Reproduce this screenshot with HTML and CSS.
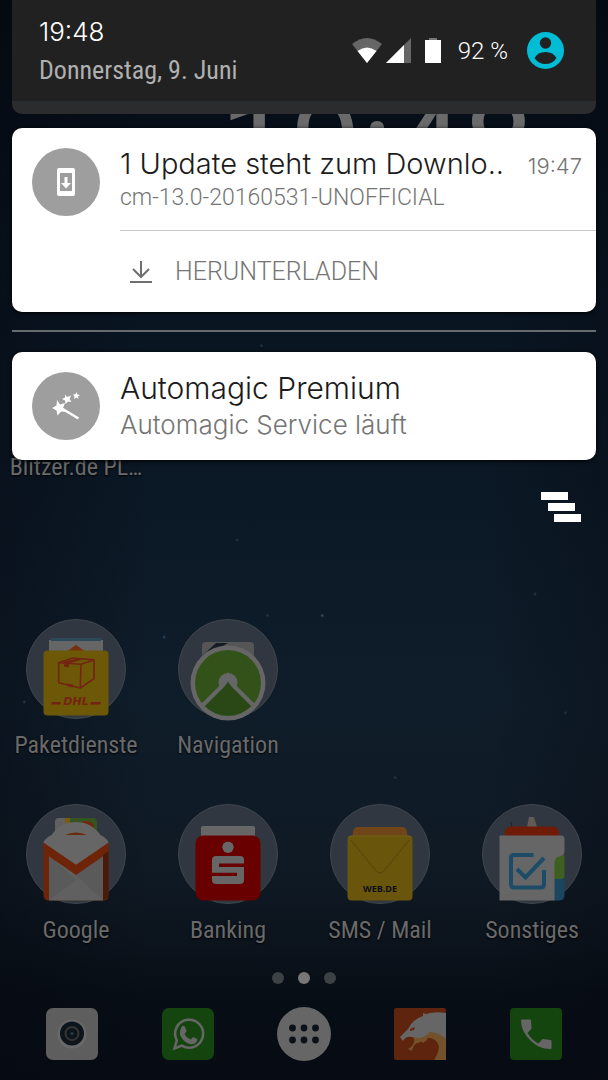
FILE: index.html
```html
<!DOCTYPE html>
<html lang="de">
<head>
  <meta charset="UTF-8">
  <meta name="viewport" content="width=device-width, initial-scale=1.0">
  <title>Benachrichtigungen</title>
  <link rel="stylesheet" href="styles.css">
</head>
<body>
  <div class="screen">
    <!-- home screen -->
    <main class="home">
      <div class="clock">19:48</div>
      <div class="apps top">
        <button class="app">Blitzer.de PL…</button>
      </div>
      <div class="apps">
        <button class="app">
          <svg viewBox="0 0 100 104">
            <circle class="folder" cx="50" cy="50" r="49.5"/>
            <path fill="#666" d="M23 21h54v14H23z"/>
            <path fill="#2c4a58" d="M25 19h50v3H25z"/>
            <path fill="#74300f" d="M50 26l10 7H40z"/>
            <rect x="17.5" y="31.5" width="65" height="65" rx="4" fill="#6c5806"/>
            <path fill="none" stroke="#732412" stroke-width="1.6" stroke-linejoin="round" d="M32.700 43.700L46.700 39 68 40.700 55 45.300zM32.700 43.700v20L54.300 69 55 45.300M54.300 69L68 59.700v-19"/>
            <path fill="#732412" d="M38 42.500l14-3 6 .5-15 4.500v4l-5-1zM41 64.500l6 1v3l-6-1.500z"/>
            <text x="50" y="86" class="dhl">DHL</text>
            <path fill="#732412" d="M26 83h9l-1 2.500h-9zM65 83h10l-1 2.500h-10z"/>
          </svg>
          <span>Paketdienste</span>
        </button>
        <button class="app">
          <svg viewBox="0 0 100 104">
            <circle class="folder" cx="50" cy="50" r="49.500"/>
            <rect x="24" y="23" width="52" height="40" rx="4" fill="#555"/>
            <path fill="#161c22" d="M24 37l14-13h12l-7 4-4 1-12 10z"/>
            <circle cx="50" cy="64" r="37.500" fill="#666"/>
            <circle cx="50" cy="64" r="33" fill="#335219"/>
            <circle cx="50" cy="63.500" r="9.500" fill="#666"/>
            <path fill="#294816" d="M50 61q2 5 7 10l16 16a33 33 0 0 1-46 0l16-16q5-5 7-10z"/>
            <path fill="none" stroke="#666" stroke-width="4" d="M25 86l19-19q4-4 6-9 2 5 6 9l19 19"/>
          </svg>
          <span>Navigation</span>
        </button>
      </div>
      <div class="apps bottom">
        <button class="app">
          <svg viewBox="0 0 100 104">
            <circle class="folder" cx="50" cy="50" r="49.500"/>
            <rect x="29" y="14" width="42" height="24" rx="4" fill="#345522"/>
            <path fill="#606060" d="M33 14h7l4 18H29V18q0-4 4-4z"/>
            <path fill="#7a5a0d" d="M39 14h5v10h-4z"/>
            <path fill="#6e2a0c" d="M55 18q10-3 13 4v8H55z"/>
            <path fill="#6e2409" d="M17.500 38.500h65V91q0 5.500-5.500 5.500H23q-5.500 0-5.500-5.500z"/>
            <path fill="#606060" d="M23 45h54v51.500H23z"/>
            <path fill="#5a5a5a" d="M50 71l27 25.500V51zM23 51l27 25-27 20.500z"/>
            <path fill="#6e2409" d="M17.500 38.500L50 60l32.500-21.500v10L50 71 17.500 48.500z"/>
            <path fill="#666" d="M17.500 38.500q1-4 8-7.500Q35 18 50 18t24.500 13q7 3.500 8 7.500L50 60.700z"/>
            <path fill="#6e2a0c" d="M39 31q11-5 22 0z"/>
            <path fill="#4a1a08" d="M77 51l5.500-4v44q0 4-5.500 5z"/>
          </svg>
          <span>Google</span>
        </button>
        <button class="app">
          <svg viewBox="0 0 100 104">
            <circle class="folder" cx="50" cy="50" r="49.500"/>
            <rect x="23" y="22" width="54" height="20" rx="2" fill="#666"/>
            <rect x="17.500" y="31.500" width="65" height="65" rx="8" fill="#680000"/>
            <circle cx="50" cy="43.300" r="5.700" fill="#666"/>
            <rect x="34" y="52" width="32" height="28" rx="4" fill="#666"/>
            <path fill="#680000" d="M41 59.500h25v3.500H41zM34 68.700h25V72H34z"/>
          </svg>
          <span>Banking</span>
        </button>
        <button class="app">
          <svg viewBox="0 0 100 104">
            <circle class="folder" cx="50" cy="50" r="49.500"/>
            <rect x="23" y="23" width="54" height="20" rx="5" fill="#704619"/>
            <rect x="17.500" y="31.500" width="65" height="65" rx="4" fill="#69550b"/>
            <path fill="none" stroke="#755f18" d="M18 34q2-2 4-2h56q3 0 4 2"/>
            <path fill="none" stroke="#50410b" stroke-width=".8" d="M21 36l25 31q4 4 8 0l25-31"/>
            <text x="50" y="88" class="web">WEB.DE</text>
          </svg>
          <span>SMS / Mail</span>
        </button>
        <button class="app">
          <svg viewBox="0 0 100 104">
            <circle class="folder" cx="50" cy="50" r="49.500"/>
            <path fill="#625a55" d="M47 13h5l3 10H45z"/>
            <path fill="none" stroke="#222" d="M29 18l1 5"/>
            <rect x="23" y="22.500" width="54" height="20" rx="6" fill="#701a08"/>
            <path fill="#1c4560" d="M72 70h10.500v21q0 5.500-5.500 5.500h-5z"/>
            <path fill="#3d5f20" d="M72 56q1-4 10.500-5v20q0 4-4 4H72z"/>
            <path fill="#666" d="M17.500 31.500H79q3.500 0 3.500 4v12q0 4-5 5-5 1-5 6v38h-55z"/>
            <path fill="none" stroke="#1c4c68" stroke-width="4" d="M51.500 51H32q-3 0-3 3v26q0 3.500 3 3.500h27q3 0 3-3.500V66"/>
            <path fill="none" stroke="#1c4c68" stroke-width="4" d="M35 65l8.500 8.500L62 54"/>
          </svg>
          <span>Sonstiges</span>
        </button>
      </div>
      <div class="dots"><i></i><i class="on"></i><i></i></div>
      <nav class="dock">
        <button aria-label="Kamera">
          <svg viewBox="0 0 52 52">
            <rect width="52" height="52" rx="7" fill="#5e5e5e"/>
            <circle cx="26" cy="26" r="14.500" fill="#696969"/>
            <circle cx="26" cy="25.500" r="12" fill="#0c141c"/>
            <circle cx="26" cy="25.500" r="6.500" fill="none" stroke="#353535" stroke-width="2"/>
            <circle cx="26" cy="25.500" r="1.500" fill="#333b42"/>
          </svg>
        </button>
        <button aria-label="WhatsApp">
          <svg viewBox="0 0 52 52">
            <rect width="52" height="52" rx="7" fill="#15450f"/>
            <path fill="none" stroke="#666" stroke-width="2.500" d="M12.500 40.500l2.300-8.200a14 14 0 1 1 5 5.300z"/>
            <path fill="#666" d="M19 20q2-4 4-1l1.500 4q0 1-2 3 2 4 6.500 5.500l2-2.500 4 2q1 0 0 2-3 5-9 2.500-6-3-8-9-.5-3 1-6.500z"/>
          </svg>
        </button>
        <button class="drawer" aria-label="Alle Apps">
          <svg viewBox="0 0 54 54">
            <circle cx="27" cy="27" r="27" fill="#666"/>
            <g fill="#0a1118">
              <circle cx="15.500" cy="21" r="3.400"/><circle cx="27" cy="21" r="3.400"/><circle cx="38.500" cy="21" r="3.400"/>
              <circle cx="15.500" cy="33" r="3.400"/><circle cx="27" cy="33" r="3.400"/><circle cx="38.500" cy="33" r="3.400"/>
            </g>
          </svg>
        </button>
        <button aria-label="Browser">
          <svg viewBox="0 0 52 52">
            <rect width="52" height="52" rx="2" fill="#5f240d"/>
            <path fill="#72512b" d="M21 28q9 2 12-7 14 4 19 0v31H40q9-14 1-20-5-3-10-2-4 5-8 5-4 2-5 8l-4-2 3-2q5-5 2-10z"/>
            <path fill="#666" d="M52 5q-11-2-20 1l-3-1v3q-10 3-15 13l-8 8 3 4q3-5 8-4 7 0 12 4 6-3 6-9 9 0 17 7z"/>
            <path fill="#5f240d" d="M16 21l5-2-1 3-4 1z"/>
            <path fill="#72512b" d="M35 25q0 7-6 10-4-3-8-5 8 1 14-5z"/>
          </svg>
        </button>
        <button aria-label="Telefon">
          <svg viewBox="0 0 52 52">
            <rect width="52" height="52" rx="4" fill="#15450f"/>
            <path fill="#666" d="M12 11.500h8q1 0 1 1l.5 8-4 4.500q4 7 11 10.500l4-4.500 8 1q1 0 1 1v7q0 1-1 1Q30 41.500 21 33q-10-9-10-20.500 0-1 1-1z"/>
          </svg>
        </button>
      </nav>
    </main>

    <!-- notification shade -->
    <section class="shade">
      <header class="status">
        <div class="when">
          <div class="time">19:48</div>
          <div class="date">Donnerstag, 9. Juni</div>
        </div>
        <div class="icons">
          <svg width="30" height="25" viewBox="0 0 30 25">
            <path fill="#666" d="M0 6Q15-6 30 6L15 25z"/>
            <path fill="#fff" d="M5.500 13q9.500-7 19 0L15 25z"/>
          </svg>
          <svg class="signal" width="25" height="25" viewBox="0 0 25 25">
            <path fill="#666" d="M25 0v25H0z"/>
            <path fill="#fff" d="M18 7v18H0z"/>
          </svg>
          <svg class="battery" width="16" height="25" viewBox="0 0 16 25">
            <path fill="#777" d="M4 0h8v3H4z"/>
            <path fill="#fff" d="M0 2h16v23H0z"/>
          </svg>
          <span class="percent">92 %</span>
          <button class="user" aria-label="Benutzer">
            <svg viewBox="0 0 37 37">
              <circle cx="18.500" cy="18.500" r="18.500" fill="#00bcd4"/>
              <circle cx="18.500" cy="11" r="5.700" fill="#212121"/>
              <path fill="#212121" d="M7.500 26Q11 20 18.500 20t11 6q-4 6-11 6t-11-6z"/>
            </svg>
          </button>
        </div>
      </header>

      <article class="card">
        <div class="info">
          <div class="badge">
            <svg width="18" height="28" viewBox="0 0 18 28">
              <rect width="18" height="28" rx="2" fill="#fff"/>
              <path fill="#9e9e9e" d="M3 5h12v18H3z"/>
              <path fill="#fff" d="M7.500 9h3v6H14l-5 5.500L4 15h3.500z"/>
            </svg>
          </div>
          <div class="text">
            <div class="line">
              <h2>1 Update steht zum Downlo..</h2>
              <time>19:47</time>
            </div>
            <p class="small">cm-13.0-20160531-UNOFFICIAL</p>
          </div>
        </div>
        <button class="action">
          <svg width="24" height="24" viewBox="0 0 24 24">
            <path fill="none" stroke="#6f6f6f" stroke-width="2" d="M12 1v16M4 9l8 8 8-8M1 22h22"/>
          </svg>
          HERUNTERLADEN
        </button>
      </article>

      <hr>

      <article class="card">
        <div class="info">
          <div class="badge">
            <svg width="28" height="28" viewBox="0 0 28 28">
              <path stroke="#fff" stroke-width="2.500" d="M9 16l17.500 10.500"/>
              <path fill="#fff" d="M5 8l3 4.500 5-1.500-2 5 3 4-5-.5-3.500 4-1-5L0 16l4.500-2.500z"/>
              <path fill="#fff" d="M13 2.500l2 2.500 4-1.500-1.500 3.500 2 3-3.500-.5-2.500 2.500-.5-3.500-3-1.500 3-1.500zM24.500 0l1 2.500 2.500.5-2 1.500.5 2.500-2-1.500-2.500 1.500.5-2.500-1.500-2 2.500-.2z"/>
            </svg>
          </div>
          <div class="text">
            <h2>Automagic Premium</h2>
            <p>Automagic Service läuft</p>
          </div>
        </div>
      </article>

      <button class="clear" aria-label="Alle löschen">
        <svg width="40" height="30" viewBox="0 0 40 30">
          <path fill="#fff" d="M0 0h27v8H0zM7 11h27v8H7zM13 22h27v8H13z"/>
        </svg>
      </button>
    </section>
  </div>
</body>
</html>
```
FILE: styles.css
```css
* {
  margin: 0;
  padding: 0;
  box-sizing: border-box;
}
body {
  background-color: #070c14;
  font-family: Inter, Roboto, sans-serif;
}
button {
  border: none;
  background-color: transparent;
  font: inherit;
  color: inherit;
}
svg {
  display: block;
}

/* both layers share one grid cell */
.screen {
  display: grid;
  min-height: 100vh;
  background-image:
    radial-gradient(circle at 53% 57%, #3d5a66 0, transparent 2px),
    radial-gradient(circle at 88% 55%, #2b3b45 0, transparent 2px),
    radial-gradient(circle at 39% 50%, #2b3b45 0, transparent 2px),
    radial-gradient(circle at 44% 57%, #2b3b45 0, transparent 2px),
    radial-gradient(circle at 27% 59%, #26506b 0, transparent 2px),
    radial-gradient(circle at 93% 66%, #2b3b45 0, transparent 2px),
    radial-gradient(circle at 65% 72%, #2b3b45 0, transparent 2px),
    radial-gradient(circle at 43% 32%, #2b3b45 0, transparent 2px),
    radial-gradient(circle at 4% 65%, #2b3b45 0, transparent 2px),
    linear-gradient(90deg, rgba(5,8,16,.4), transparent 25%, transparent 80%, rgba(5,8,16,.3)),
    linear-gradient(#050a13, #081420 25%, #0b1825 45%, #0f1d2a 65%, #0f1923 82%, #080e16 92%, #070b13);
}
.home, .shade {
  grid-area: 1 / 1;
}

/* home screen */
.home {
  display: flex;
  flex-direction: column;
  padding-top: 73px;
  font-family: "Roboto Condensed", "Liberation Sans Narrow", Roboto, sans-serif;
  color: #6a6a6a;
}
.clock {
  padding-left: 24%;
  text-align: center;
  font-family: Roboto, sans-serif;
  font-size: 126px;
  line-height: 144px;
}
.apps {
  display: grid;
  grid-template-columns: repeat(4, 1fr);
  height: 185px;
}
.apps.top {
  align-items: end;
  height: 264px;
  margin-bottom: 138px;
}
.apps.bottom {
  height: 168px;
}
.app {
  display: flex;
  flex-direction: column;
  align-items: center;
  font-size: 24px;
  line-height: 28px;
  white-space: nowrap;
  text-shadow: 0 1px 2px #000;
}
.app svg {
  width: 100px;
  height: 104px;
  margin-bottom: 8px;
  text-shadow: none;
}
.folder {
  fill: #303740;
  stroke: #40464c;
}
.dhl {
  font: italic bold 11px "DejaVu Sans", sans-serif;
  fill: #732412;
  text-anchor: middle;
}
.web {
  font: bold 9px "Open Sans", sans-serif;
  fill: #0e0e1a;
  text-anchor: middle;
}
.dots {
  display: flex;
  justify-content: center;
  gap: 14px;
  padding-bottom: 23px;
}
.dots i {
  width: 12px;
  height: 12px;
  border-radius: 50%;
  background-color: #3c4145;
}
.dots .on {
  background-color: #777;
}
.dock {
  display: grid;
  grid-template-columns: repeat(5, 1fr);
  place-items: center;
  padding: 0 14px;
}
.dock svg {
  width: 52px;
}
.dock .drawer svg {
  width: 54px;
}

/* notification shade */
.shade {
  position: relative;
  padding: 0 12px;
  font-weight: 300;
}
.status {
  display: flex;
  justify-content: space-between;
  height: 114px;
  margin-bottom: 14px;
  padding: 0 32px 0 27px;
  border-bottom: 13px solid #2a2c2d;
  border-radius: 0 0 10px 10px;
  background-color: #212121;
}
.when {
  padding-top: 16px;
}
.time {
  font-size: 26px;
  line-height: 32px;
  color: #fff;
}
.date {
  padding-top: 6px;
  font-family: "Roboto Condensed", "Liberation Sans Narrow", Roboto, sans-serif;
  font-size: 26px;
  font-weight: 400;
  line-height: 32px;
  color: #b0b0b0;
}
.icons {
  display: flex;
  align-items: center;
}
.signal {
  margin: 0 14px 0 4px;
}
.percent {
  margin: 0 19px 0 17px;
  font-family: Roboto, sans-serif;
  font-size: 24px;
  color: #fff;
}
.user svg {
  width: 37px;
}
.card {
  border-radius: 10px;
  background-color: #fff;
  box-shadow: 0 1px 4px #000;
  color: #757575;
}
.info {
  display: flex;
  padding-left: 20px;
}
.badge {
  display: flex;
  flex: none;
  align-items: center;
  justify-content: center;
  width: 68px;
  height: 68px;
  margin: 20px 20px 20px 0;
  border-radius: 50%;
  background-color: #9e9e9e;
}
.text {
  flex: 1;
  padding: 18px 14px 0 0;
}
.line {
  display: flex;
  align-items: baseline;
  justify-content: space-between;
}
h2 {
  font-size: 30px;
  font-weight: 300;
  line-height: 36px;
  white-space: nowrap;
  color: #1c1c1c;
}
.line h2 {
  font-size: 29px;
}
time {
  font-size: 22px;
}
p {
  font-size: 26px;
  line-height: 38px;
}
p.small {
  font-family: Roboto, sans-serif;
  font-size: 23px;
  line-height: 32px;
}
.action {
  display: flex;
  align-items: center;
  gap: 22px;
  width: calc(100% - 108px);
  height: 82px;
  margin: -6px 0 0 108px;
  padding-left: 9px;
  border-top: 1px solid #c8c8c8;
  font-family: Roboto, sans-serif;
  font-size: 25px;
}
hr {
  height: 2px;
  margin: 18px 0 20px;
  border: none;
  background-color: #666b70;
}
.clear {
  display: block;
  margin: 32px 15px 0 auto;
}
```
